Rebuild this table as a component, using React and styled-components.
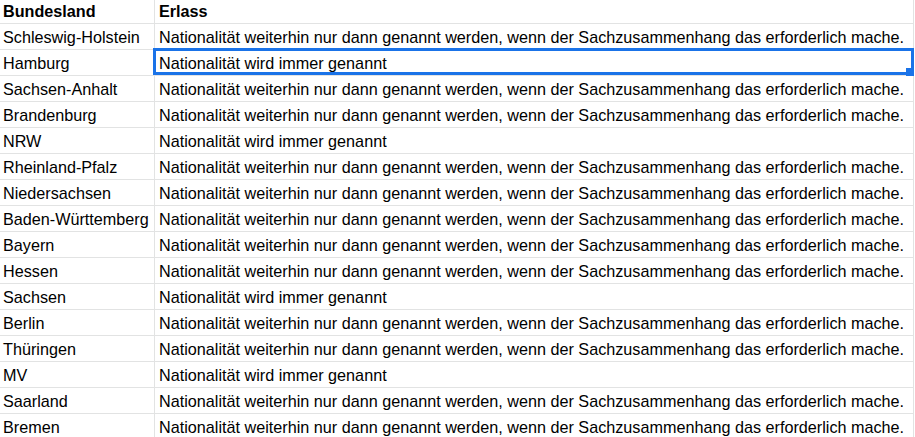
import React from 'react';
import styled, { createGlobalStyle } from 'styled-components';

const GlobalStyle = createGlobalStyle`
  html, body { margin: 0; padding: 0; background: #fff; }
  body { font-family: "Liberation Sans", Arial, sans-serif; color: #000; }
`;

const LONG = 'Nationalität weiterhin nur dann genannt werden, wenn der Sachzusammenhang das erforderlich mache.';
const SHORT = 'Nationalität wird immer genannt';

const rows = [
  ['Schleswig-Holstein', LONG],
  ['Hamburg', SHORT, true],
  ['Sachsen-Anhalt', LONG],
  ['Brandenburg', LONG],
  ['NRW', SHORT],
  ['Rheinland-Pfalz', LONG],
  ['Niedersachsen', LONG],
  ['Baden-Württemberg', LONG],
  ['Bayern', LONG],
  ['Hessen', LONG],
  ['Sachsen', SHORT],
  ['Berlin', LONG],
  ['Thüringen', LONG],
  ['MV', SHORT],
  ['Saarland', LONG],
  ['Bremen', LONG],
];

function App() {
  return (
    <>
      <GlobalStyle />
      <Sheet>
        <Cell header first>Bundesland</Cell>
        <Cell header>Erlass</Cell>
        {rows.map(([land, text, selected]) => (
          <React.Fragment key={land}>
            <Cell first>{land}</Cell>
            <Cell>
              {text}
              {selected && (
                <Selection>
                  <Handle />
                </Selection>
              )}
            </Cell>
          </React.Fragment>
        ))}
      </Sheet>
    </>
  );
}

export default App;

const Sheet = styled.div`
  display: grid;
  grid-template-columns: 155px 759px;
  grid-template-rows: 24px;
  grid-auto-rows: 26px;
  width: 914px;
`;

const Cell = styled.div`
  position: relative;
  display: flex;
  align-items: center;
  box-sizing: border-box;
  padding-left: ${p => (p.first ? '3px' : '4px')};
  padding-top: ${p => (p.header ? '0' : '1px')};
  border-bottom: 1px solid #e2e3e3;
  border-right: 1px solid #e2e3e3;
  font-size: 16.2px;
  font-weight: ${p => (p.header ? 700 : 400)};
  white-space: nowrap;
`;

const Selection = styled.div`
  position: absolute;
  left: -2px;
  top: -2px;
  right: -1px;
  bottom: 0;
  border: 3px solid #1a73e8;
  pointer-events: none;
`;

const Handle = styled.div`
  position: absolute;
  right: -3px;
  bottom: -4px;
  width: 8px;
  height: 8px;
  background: #1a73e8;
`;
